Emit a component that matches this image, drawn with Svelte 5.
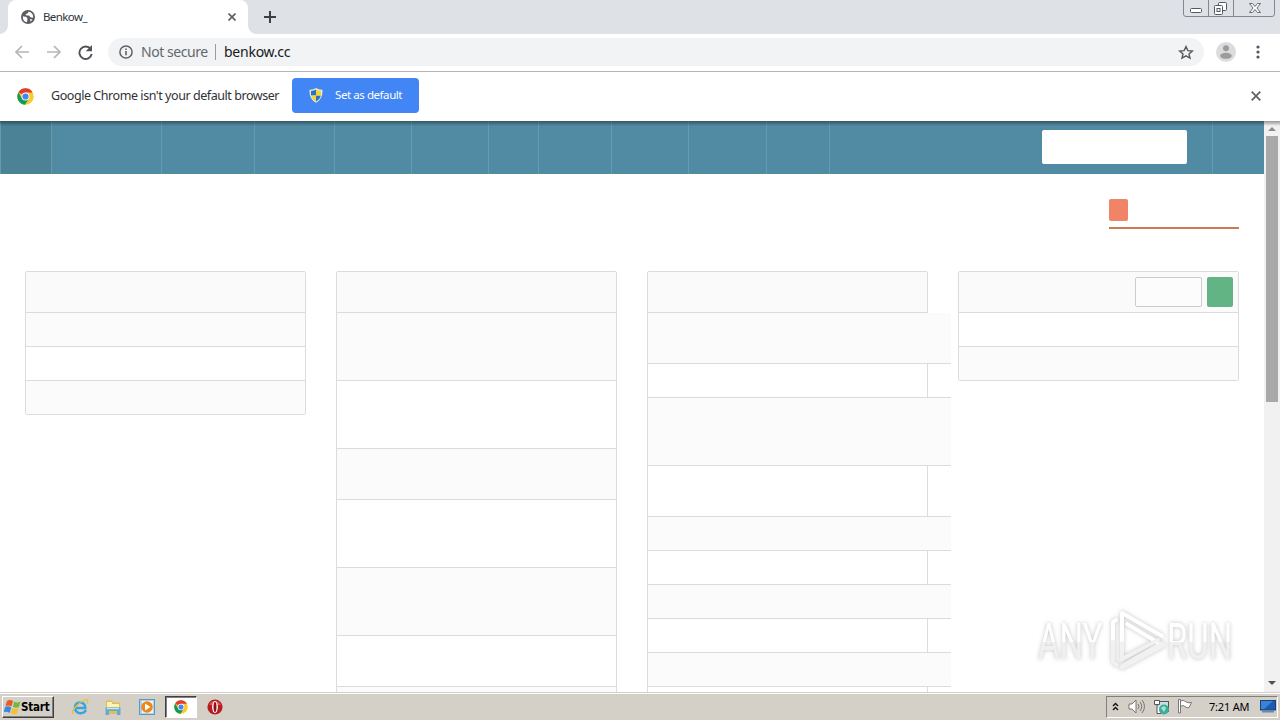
<script>
  const nav = [52, 110, 93, 80, 77, 77, 50, 73, 77, 78, 63];
  const panels = [
    { rows: [34, 34, 34], first: 'shade' },
    { rows: [68, 68, 51, 68, 68, 51, 68], first: 'shade' },
    { rows: [51, 34, 68, 51, 34, 34, 34, 34, 34, 34], first: 'shade', wide: true },
    { rows: [34, 34], first: 'plain', tools: true }
  ];
</script>

{#snippet chrome(size)}
  <svg width={size} height={size} viewBox="0 0 18 18">
    <circle cx="9" cy="9" r="8.7" fill="#fbc928" />
    <path d="M9 9 1.5 4.6A8.7 8.7 0 0 1 16.6 4.8H9z" fill="#e33b2e" />
    <path d="M1.5 4.6A8.7 8.7 0 0 0 8.4 17.7L12.7 11 9 9 5.3 11z" fill="#159954" />
    <circle cx="9" cy="9" r="4.2" fill="#fff" />
    <circle cx="9" cy="9" r="3.3" fill="#4285f4" />
  </svg>
{/snippet}

<div class="screen">
  <header class="tabs">
    <div class="tab">
      <svg class="globe" width="14" height="14" viewBox="0 0 14 14"><circle cx="7" cy="7" r="7" fill="#5a5d61" /><path d="M2 6.2 5.4 7l1.1 1.7-.5 3.5C3 11.8 1.4 9 2 6.2M7.5 1.8 6.4 3.5l-2 .8 1.2 1.2 2.5.1 1.3 1.7 2.7.5C12.6 4.7 10.500 2 7.500 1.800M9 9l2.400.500-1.700 2.200z" fill="#fff" /></svg>
      <span class="title">Benkow_</span>
      <svg width="8" height="8" viewBox="0 0 8 8"><path d="m.5.5 7 7m0-7-7 7" stroke="#5f6368" stroke-width="1.7" /></svg>
    </div>
    <svg class="plus" width="12" height="12" viewBox="0 0 12 12"><path d="M6 0v12M0 6h12" stroke="#3c4043" stroke-width="2" /></svg>
    <div class="winctl">
      <svg width="92" height="17" viewBox="0 0 92 17" fill="none">
        <path d="M.5 0v14q0 2.500 2.500 2.500h86q2.500 0 2.500-2.500V0M25.500 0v16M50.500 0v16" stroke="#85878f" />
        <rect x="7.500" y="8.500" width="11" height="4" rx="1" stroke="#555861" fill="#fff" />
        <rect x="35.500" y="2.500" width="8" height="8" rx="1" stroke="#555861" fill="#fff" />
        <rect x="31.500" y="5.500" width="8" height="9" rx="1" stroke="#555861" fill="#fff" /><rect x="34" y="8.500" width="3" height="3" stroke="#555861" />
        <path d="M66.500 3.500h3l2.500 3 2.500-3h3L74 8l3.500 4.500h-3l-2.500-3-2.500 3h-3L70 8z" stroke="#666971" fill="#fff" />
      </svg>
    </div>
  </header>

  <div class="toolbar">
    <svg class="nav-icons" width="64" height="16" viewBox="0 0 64 16" fill="none" stroke-width="1.700">
      <path d="M15 8H2m6-6L2 8l6 6M33 8h13m-6-6 6 6-6 6" stroke="#b5b7ba" />
    </svg>
    <svg class="reload" width="15" height="15" viewBox="0 0 15 15"><path d="M12.600 4A6.200 6.200 0 1 0 13.700 9" fill="none" stroke="#505357" stroke-width="1.900" /><path d="M14 0v6.300H7.700z" fill="#505357" /></svg>
    <div class="address">
      <svg width="14" height="14" viewBox="0 0 14 14"><circle cx="7" cy="7" r="6.100" fill="none" stroke="#5f6368" stroke-width="1.500" /><path d="M7 6v4.300M7 3.400V5" stroke="#5f6368" stroke-width="1.600" /></svg>
      <span class="secure">Not secure</span><i></i><span class="url">benkow.cc</span>
      <svg class="star" width="16" height="15" viewBox="0 0 16 15"><path d="m8 1.600 1.900 4 4.400.400-3.300 2.900 1 4.300L8 10.900l-4 2.300 1-4.300L1.700 6l4.400-.400z" fill="none" stroke="#55585c" stroke-width="1.400" /></svg>
    </div>
    <svg class="avatar" width="20" height="20" viewBox="0 0 20 20"><circle cx="10" cy="10" r="10" fill="#dcdcdd" /><circle cx="10" cy="6.300" r="3" fill="#9a9b9d" /><ellipse cx="10" cy="13.800" rx="5.800" ry="3" fill="#9a9b9d" /></svg>
    <svg class="dots" width="4" height="14" viewBox="0 0 4 14" fill="#55585c"><circle cx="2" cy="2" r="1.600" /><circle cx="2" cy="7" r="1.600" /><circle cx="2" cy="12" r="1.600" /></svg>
  </div>

  <div class="infobar">
    {@render chrome(17)}
    <span class="message">Google Chrome isn't your default browser</span>
    <button>
      <svg width="14" height="15" viewBox="0 0 14 15"><path d="M7 0Q4 2 .5 1.800q-.600 9 6.500 13 7.100-4 6.500-13Q10 2 7 0" fill="#e8e6d4" /><path d="M7 1.500Q5 2.800 2 3v4.500h5zM7 7.500h4.800q-.800 3.800-4.800 6z" fill="#2474c8" /><path d="M7 1.500Q9 2.800 12 3v4.500H7zM7 7.500H2.200q.8 3.800 4.800 6z" fill="#f4d631" /></svg>
      <span>Set as default</span>
    </button>
    <svg class="dismiss" width="10" height="10" viewBox="0 0 10 10"><path d="m.7.700 8.600 8.600m0-8.600L.7 9.300" stroke="#606368" stroke-width="1.800" /></svg>
  </div>

  <div class="viewport">
    <main>
      <nav>
        {#each nav as w}<b style:width={`${w}px`}></b>{/each}
        <div class="search"></div><div class="navend"></div>
      </nav>
      <div class="statusline"><div class="status"><i></i></div></div>
      <div class="panels">
        {#each panels as p}
          <section>
            <div class="phead">{#if p.tools}<i class="field"></i><i class="go"></i>{/if}</div>
            <div class="table" class:wide={p.wide}>
              {#each p.rows as h, i}
                <div class="row" class:shade={(i % 2 === 0) === (p.first === 'shade')} style:height={`${h}px`}></div>
              {/each}
            </div>
          </section>
        {/each}
      </div>
    </main>
    <aside>
      <svg width="16" height="15" viewBox="0 0 16 15"><path d="m4 10 4-4 4 4z" fill="#8c8c8c" /></svg>
      <div class="thumb"></div>
      <svg class="down" width="16" height="17" viewBox="0 0 16 17"><path d="m4 6 4 4 4-4z" fill="#505050" /></svg>
    </aside>
    <svg class="watermark" width="225" height="80" viewBox="0 0 225 80">
      <defs><linearGradient id="fade" gradientUnits="userSpaceOnUse" x1="0" y1="-55" x2="0" y2="25"><stop offset=".47" stop-color="#fff" /><stop offset=".48" stop-color="#f0f0f0" /></linearGradient></defs>
      <g class="glow">
        <text transform="translate(7 55) scale(.66 1)" fill="url(#fade)">ANY</text>
        <text transform="translate(136 55) scale(.66 1)" fill="url(#fade)">RUN</text>
        <g fill="none" stroke-linejoin="round" stroke-linecap="round">
          <path d="M130 40 91 63l41-22" stroke="#f1f1f1" stroke-width="5" />
          <path d="M91 55V9l40 23" stroke="#fff" stroke-width="4" />
          <path d="M96 20l30 18" stroke="#fff" stroke-width="4" />
          <path d="M91 39v16l36-19" stroke="#f1f1f1" stroke-width="4" />
          <path d="M85 16l-3 2v19" stroke="#fff" stroke-width="4" />
          <path d="M82 38v20l4 3" stroke="#f1f1f1" stroke-width="4" />
        </g>
      </g>
    </svg>
  </div>

  <footer>
    <div class="start">
      <svg width="17" height="16" viewBox="0 0 17 16"><path d="M3 2q3-2 6 0L7.500 7.500Q5 6 1.500 7z" fill="#e75b25" /><path d="M10 2.500q3 2 6.500 0L15 8q-3 1.500-6-.3z" fill="#76b83f" /><path d="M1.200 8q3-1.500 6 .500L5.700 14Q3 12-.300 13z" fill="#3c87d6" /><path d="M8.400 9q3 2 6.200.300L13 14.500q-3 1.500-6-.3z" fill="#f6bf31" /></svg>
      <span>Start</span>
    </div>
    <svg class="ie" width="18" height="18" viewBox="0 0 18 18" fill="none"><path d="M15 12Q13 15.500 9 15.200 4 14.800 4 9.600 4.400 4.500 9 4.500q5 0 5.300 5.500H5" stroke="#36a5de" stroke-width="2.500" /><path d="M2.500 16q-3-1.800 3-8 8-8 11-6 1 1-.500 3.500" stroke="#e8bb42" stroke-width="1.300" /></svg>
    <svg class="folder" width="18" height="18" viewBox="0 0 18 18"><path d="M2 2.500h6l1 2h7V16H2z" fill="#e3bd58" /><path d="M3 4h5v2h7v3H3z" fill="#fff3b1" /><path d="M1.500 9.500h15V17H13v-4H5v4H1.500z" fill="#62acd0" /><path d="M3 10.500h12" stroke="#c1e7f8" stroke-width="1.500" /></svg>
    <svg class="media" width="16" height="16" viewBox="0 0 16 16"><rect x=".5" y=".5" width="15" height="15" fill="#a9d3ef" stroke="#559bc9" /><rect x="3" y="2" width="11" height="12" fill="#f4f4ec" /><circle cx="8" cy="8" r="5.800" fill="#ef8618" /><path d="m6 4.500 5.500 3.500L6 11.500z" fill="#fff" /></svg>
    <div class="active">{@render chrome(14)}</div>
    <svg class="red" width="16" height="16" viewBox="0 0 16 16"><circle cx="8" cy="8" r="7.600" fill="#b71c20" /><path d="M2 6a6.500 6.500 0 0 1 12 0z" fill="#d3555a" /><ellipse cx="8" cy="8" rx="2.900" ry="5.900" fill="#fff" /><ellipse cx="8" cy="8" rx="1.500" ry="5" fill="#941014" /></svg>
    <div class="tray">
      <svg class="chev" width="7" height="9" viewBox="0 0 7 9" fill="none" stroke="#111" stroke-width="1.400"><path d="m1 4 2.500-2.500L6 4M1 8l2.500-2.500L6 8" /></svg>
      <svg class="sound" width="17" height="15" viewBox="0 0 17 15" fill="none" stroke="#77756f"><path d="M1 5h3l4-4v13l-4-4H1z" fill="#fff" /><path d="M10 5q2 2.500 0 5m2-7q3.500 4.500 0 9m2-11q5 6.500 0 13" /></svg>
      <svg class="net" width="17" height="16" viewBox="0 0 17 16"><rect x="4.500" y="2.500" width="11" height="10" fill="#cbdde4" stroke="#555" /><path d="M1.500 1.500h5v4h-5zM4 5.500v9h4" fill="#fff" stroke="#555" /><circle cx="11" cy="10.500" r="5" fill="#3cae98" /><path d="m8 9 3-2 2 2-2 4z" fill="#a8e5d1" /></svg>
      <svg class="flag" width="16" height="15" viewBox="0 0 16 15"><path d="M1.500.500h2V14h-2zM3.500 2q3-1.500 5 .500t6 1l-2.500 5q-2 1-4-1t-4.500 0z" fill="#fff" stroke="#777" /></svg>
      <span>7:21 AM</span>
      <svg class="desktop" width="16" height="13" viewBox="0 0 16 13"><rect x=".5" y=".5" width="15" height="9.500" fill="#1d5bb2" stroke="#184275" /><path d="M1 1h12L4 9H1z" fill="#3a82d7" /><path d="M2 11.500h12" stroke="#6488b0" stroke-width="2" /></svg>
    </div>
  </footer>
</div>

<style>
  :global(body) { margin: 0; }
  * { box-sizing: border-box; }
  svg { display: block; flex: none; }
  .screen { width: 1280px; height: 720px; overflow: hidden; display: flex; flex-direction: column; background: #fff; color: #303236; font: 12px "Noto Sans", sans-serif; }
  span { white-space: nowrap; }
  .tabs { height: 34px; flex: none; background: #dee1e6; display: flex; padding-left: 8px; }
  .tab { width: 240px; height: 34px; background: #fff; border-radius: 8px 8px 0 0; display: flex; align-items: center; padding: 0 12px 0 13px; position: relative; }
  .tab::before, .tab::after { content: ""; position: absolute; bottom: 0; width: 8px; height: 8px; }
  .tab::before { left: -8px; background: radial-gradient(circle at 0 0, transparent 7.500px, #fff 8px); }
  .tab::after { right: -8px; background: radial-gradient(circle at 100% 0, transparent 7.500px, #fff 8px); }
  .title { margin-left: 8px; flex: 1; font-size: 11.500px; letter-spacing: -.6px; padding-bottom: 2px; }
  .plus { margin: 11px 0 0 16px; }
  .winctl { margin-left: auto; margin-right: 5px; }
  .toolbar { height: 38px; flex: none; border-bottom: 1px solid #b3b5b8; display: flex; align-items: center; padding: 0 0 1px 14px; }
  .reload { margin: 0 15px 0 0; }
  .address { width: 1096px; height: 28px; border-radius: 14px; background: #f1f3f4; display: flex; align-items: center; padding: 0 10px 0 11px; font-size: 14px; }
  .address span { margin-top: -2px; }
  .secure { margin-left: 8px; width: 67px; color: #64676b; letter-spacing: -.45px; }
  .address i { width: 1px; height: 16px; background: #999ca1; margin: 0 8px 0 7px; }
  .url { color: #17191c; letter-spacing: -.25px; }
  .star { margin-left: auto; }
  .avatar { margin-left: 12px; }
  .dots { margin-left: 20px; }
  .infobar { height: 49px; flex: none; display: flex; align-items: center; padding: 0 19px 1px 17px; }
  .message { width: 229px; margin: -2px 0 0 17px; font-size: 12.500px; letter-spacing: -.44px; }
  button { margin: -1px 0 0 12px; width: 127px; height: 35px; border: 0; border-radius: 4px; background: #4285f4; color: #fff; display: flex; align-items: center; padding: 0 17px; font: 11.500px "Noto Sans", sans-serif; letter-spacing: -.43px; }
  button span { margin: -2px 0 0 12px; }
  .dismiss { margin-left: auto; }
  .viewport { height: 571px; flex: none; display: flex; position: relative; overflow: hidden; }
  .viewport::before { content: ""; position: absolute; inset: 0 0 auto; height: 5px; background: linear-gradient(#00000060, #0000); z-index: 2; }
  main { width: 1264px; overflow: hidden; }
  nav { height: 53px; background: #518ba3; display: flex; }
  nav b { height: 53px; border-right: 1px solid #659ab0; }
  nav b:first-child { background: #4b8296; border-left: 1px solid #659ab0; }
  .search { width: 145px; height: 34px; margin: 9px 25px 0 auto; background: #fff; border-radius: 2px; }
  .navend { width: 52px; border-left: 1px solid #659ab0; }
  .statusline { height: 97px; padding: 25px 25px 0; display: flex; justify-content: flex-end; }
  .status { width: 130px; height: 30px; border-bottom: 2px solid #c77d50; }
  .status i { display: block; width: 19px; height: 22px; border-radius: 2px; background: #ef8467; }
  .panels { display: flex; align-items: flex-start; gap: 30px; padding-left: 25px; }
  section { width: 281px; flex: none; border: 1px solid #dcdcdc; border-radius: 2px; }
  .phead { height: 41px; background: #fafafa; border-bottom: 1px solid #dcdcdc; display: flex; justify-content: flex-end; padding: 5px; gap: 5px; }
  .field { width: 67px; height: 30px; border: 1px solid #ccc; border-radius: 2px; background: #fcfcfc; }
  .go { width: 26px; height: 30px; background: #63b485; border-radius: 2px; }
  .row { border-top: 1px solid #dcdcdc; }
  .row:first-child { border-top: 0; margin-bottom: -1px; }
  .shade { background: #fbfbfb; }
  .wide { width: 303px; }
  aside { width: 16px; background: #f1f1f1; display: flex; flex-direction: column; align-items: center; }
  .thumb { width: 12px; height: 266px; background: #a8a8a8; }
  .down { margin-top: auto; }
  .watermark { position: absolute; left: 1031px; top: 483px; }
  .watermark text { font: 50px Roboto, sans-serif; }
  .glow { filter: drop-shadow(0 0 2px #9999); }
  footer { height: 28px; flex: none; background: #d4d0c8; box-shadow: inset 0 1px #d4d0c8, inset 0 2px #fff; display: flex; align-items: center; padding: 1px 2px 0; }
  .start { width: 52px; height: 22px; border: 1px solid; border-color: #fff #404040 #404040 #fff; box-shadow: inset -1px -1px #808080; display: flex; align-items: center; padding-left: 1px; color: #000; font: bold 11.500px "DejaVu Sans Condensed", "DejaVu Sans", sans-serif; letter-spacing: -.2px; }
  .ie { margin-left: 17px; }
  .folder { margin-left: 15px; }
  .media { margin-left: 17px; }
  .active { width: 32px; height: 22px; margin-left: 10px; background: #fff; border: 1px solid; border-color: #404040 #fff #fff #404040; box-shadow: inset 1px 1px #808080; display: flex; align-items: center; justify-content: center; }
  .red { margin-left: 10px; }
  .tray { margin-left: auto; width: 172px; height: 22px; border: 1px solid; border-color: #808080 #fff #fff #808080; display: flex; align-items: center; padding-left: 5px; color: #000; font-size: 11px; }
  .sound { margin-left: 9px; }
  .net { margin-left: 8px; }
  .flag { margin-left: 7px; }
  .tray span { margin-left: 16px; width: 41px; letter-spacing: -.2px; }
  .desktop { margin-left: 10px; }
</style>
